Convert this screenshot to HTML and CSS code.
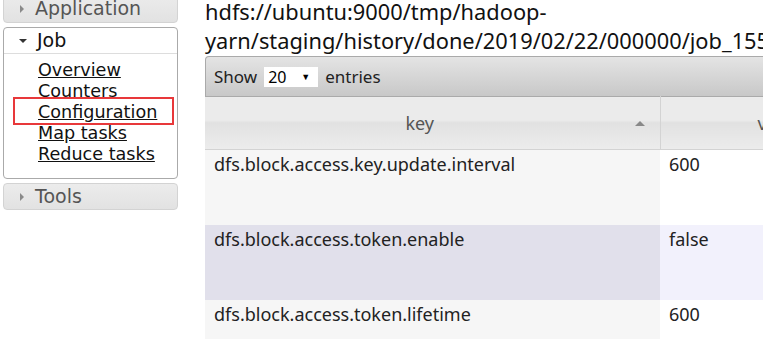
FILE: index.html
```html
<!DOCTYPE html>
<html lang="en">
<head>
  <meta charset="UTF-8">
  <title>Job Configuration</title>
  <link rel="stylesheet" href="styles.css">
</head>
<body>
  <div class="page">
    <div class="nav">
      <div class="nav-box closed">
        <div class="nav-head"><span class="tri-right"></span>Application</div>
      </div>
      <div class="nav-box open">
        <div class="nav-head"><span class="tri-down"></span>Job</div>
        <ul class="nav-links">
          <li><a href="#">Overview</a></li>
          <li><a href="#">Counters</a></li>
          <li class="marked"><a href="#">Configuration</a></li>
          <li><a href="#">Map tasks</a></li>
          <li><a href="#">Reduce tasks</a></li>
        </ul>
      </div>
      <div class="nav-box closed">
        <div class="nav-head"><span class="tri-right"></span>Tools</div>
      </div>
    </div>

    <div class="main">
      <div class="conf-path">hdfs://ubuntu:9000/tmp/hadoop-<br>yarn/staging/history/done/2019/02/22/000000/job_1550812345678_0001_conf.xml</div>

      <div class="table-wrap">
        <div class="toolbar">
          Show
          <span class="select">20<span class="select-arrow">&#9660;</span></span>
          entries
        </div>
        <table class="conf-table">
          <thead>
            <tr>
              <th class="col-key">key<span class="sort-up"></span></th>
              <th class="col-value">value</th>
              <th class="col-source">source chain</th>
            </tr>
          </thead>
          <tbody>
            <tr class="even">
              <td class="sorted">dfs.block.access.key.update.interval</td>
              <td>600</td>
              <td>hdfs-default.xml &lArr; job.xml &lArr; hdfs://ubuntu:9000/tmp/hadoop-yarn/staging/history/done</td>
            </tr>
            <tr class="odd">
              <td class="sorted">dfs.block.access.token.enable</td>
              <td>false</td>
              <td>hdfs-default.xml &lArr; job.xml &lArr; hdfs://ubuntu:9000/tmp/hadoop-yarn/staging/history/done</td>
            </tr>
            <tr class="even">
              <td class="sorted">dfs.block.access.token.lifetime</td>
              <td>600</td>
              <td>hdfs-default.xml &lArr; job.xml &lArr; hdfs://ubuntu:9000/tmp/hadoop-yarn/staging/history/done</td>
            </tr>
          </tbody>
        </table>
      </div>
    </div>
  </div>
</body>
</html>
```

FILE: styles.css
```css
body {
  margin: 0;
  background-color: #fff;
  font-family: "DejaVu Sans", Verdana, sans-serif;
  color: #222;
  overflow: hidden;
}

.page {
  display: flex;
  align-items: flex-start;
}

.nav {
  width: 175px;
  margin-left: 3px;
  margin-top: -7px;
  flex-shrink: 0;
}

.nav-box {
  border: 1px solid #cfcfcf;
  border-radius: 4px;
  margin-bottom: 4px;
}

.nav-box.closed {
  background: linear-gradient(#ececec, #e2e2e2);
  border-color: #d3d3d3;
}

.nav-box.open {
  border-color: #aaa;
  background-color: #fff;
}

.nav-head {
  height: 27px;
  line-height: 27px;
  font-size: 19px;
  color: #555;
  padding-left: 16px;
  display: flex;
  align-items: center;
}

.nav-box.open .nav-head {
  height: 25px;
  line-height: 25px;
  color: #111;
  border-bottom: 1px solid #ddd;
  padding-left: 15px;
}

.nav-box.closed .nav-head {
  padding-top: 1px;
}

.nav-box.closed:last-child .nav-head {
  height: 25px;
  padding-top: 0;
}

.tri-right {
  width: 0;
  height: 0;
  border-top: 4px solid transparent;
  border-bottom: 4px solid transparent;
  border-left: 4px solid #8a8a8a;
  margin-right: 11px;
}

.tri-down {
  width: 0;
  height: 0;
  border-left: 4px solid transparent;
  border-right: 4px solid transparent;
  border-top: 4px solid #333;
  margin-right: 10px;
}

.nav-links {
  list-style: none;
  margin: 0;
  padding: 6px 0 13px 34px;
}

.nav-links li {
  height: 21px;
  line-height: 21px;
  font-size: 17.6px;
}

.nav-links a {
  color: #111;
}

.nav-links li.marked {
  position: relative;
}

.nav-links li.marked::before {
  content: "";
  position: absolute;
  left: -25px;
  top: -5px;
  width: 157px;
  height: 24px;
  border: 2px solid #e8383a;
}

.main {
  margin-left: 27px;
  flex-shrink: 0;
}

.conf-path {
  font-family: "Noto Sans", sans-serif;
  font-size: 21.8px;
  line-height: 29px;
  color: #111;
  white-space: nowrap;
  margin-top: -3px;
  margin-bottom: 1px;
}

.table-wrap {
  width: 1100px;
}

.toolbar {
  height: 39px;
  display: flex;
  align-items: center;
  gap: 6px;
  padding-left: 8px;
  border: 1px solid #aaa;
  border-bottom: none;
  border-radius: 4px 4px 0 0;
  background: linear-gradient(#e4e4e4, #c8c8c8);
  font-family: "Noto Sans", sans-serif;
  font-size: 17px;
  color: #222;
}

.select {
  background-color: #fff;
  width: 50px;
  height: 20px;
  line-height: 20px;
  padding-left: 4px;
  font-size: 16px;
  color: #000;
  position: relative;
  margin: 0 1px;
}

.select-arrow {
  position: absolute;
  right: 8px;
  top: 0;
  font-size: 9px;
}

.conf-table {
  border-collapse: collapse;
  width: 100%;
  table-layout: fixed;
  font-family: "Noto Sans", sans-serif;
  font-size: 18px;
}

.conf-table th {
  height: 53px;
  font-weight: normal;
  color: #555;
  background: linear-gradient(#ebebeb 0, #ebebeb 44%, #e1e1e1 48%, #ececec 100%);
  border-top: 1px solid #aaa;
  border-bottom: 1px solid #d3d3d3;
  padding: 0 25px 0 0;
  box-sizing: border-box;
}

.conf-table th.col-key {
  width: 455px;
  border-right: 1px solid #d3d3d3;
  position: relative;
}

.conf-table th.col-value {
  width: 265px;
  border-right: 1px solid #d3d3d3;
}

.sort-up {
  position: absolute;
  right: 15px;
  top: 24px;
  width: 0;
  height: 0;
  border-left: 5px solid transparent;
  border-right: 5px solid transparent;
  border-bottom: 5px solid #888;
}

.conf-table td {
  height: 75px;
  vertical-align: top;
  padding: 2px 9px 0 9px;
  box-sizing: border-box;
  color: #222;
  overflow: hidden;
}

.conf-table tr.even td {
  background-color: #fff;
}

.conf-table tr.even td.sorted {
  background-color: #f6f6f6;
}

.conf-table tr.odd td {
  background-color: #f2f1fc;
}

.conf-table tr.odd td.sorted {
  background-color: #e1e0eb;
}
```
